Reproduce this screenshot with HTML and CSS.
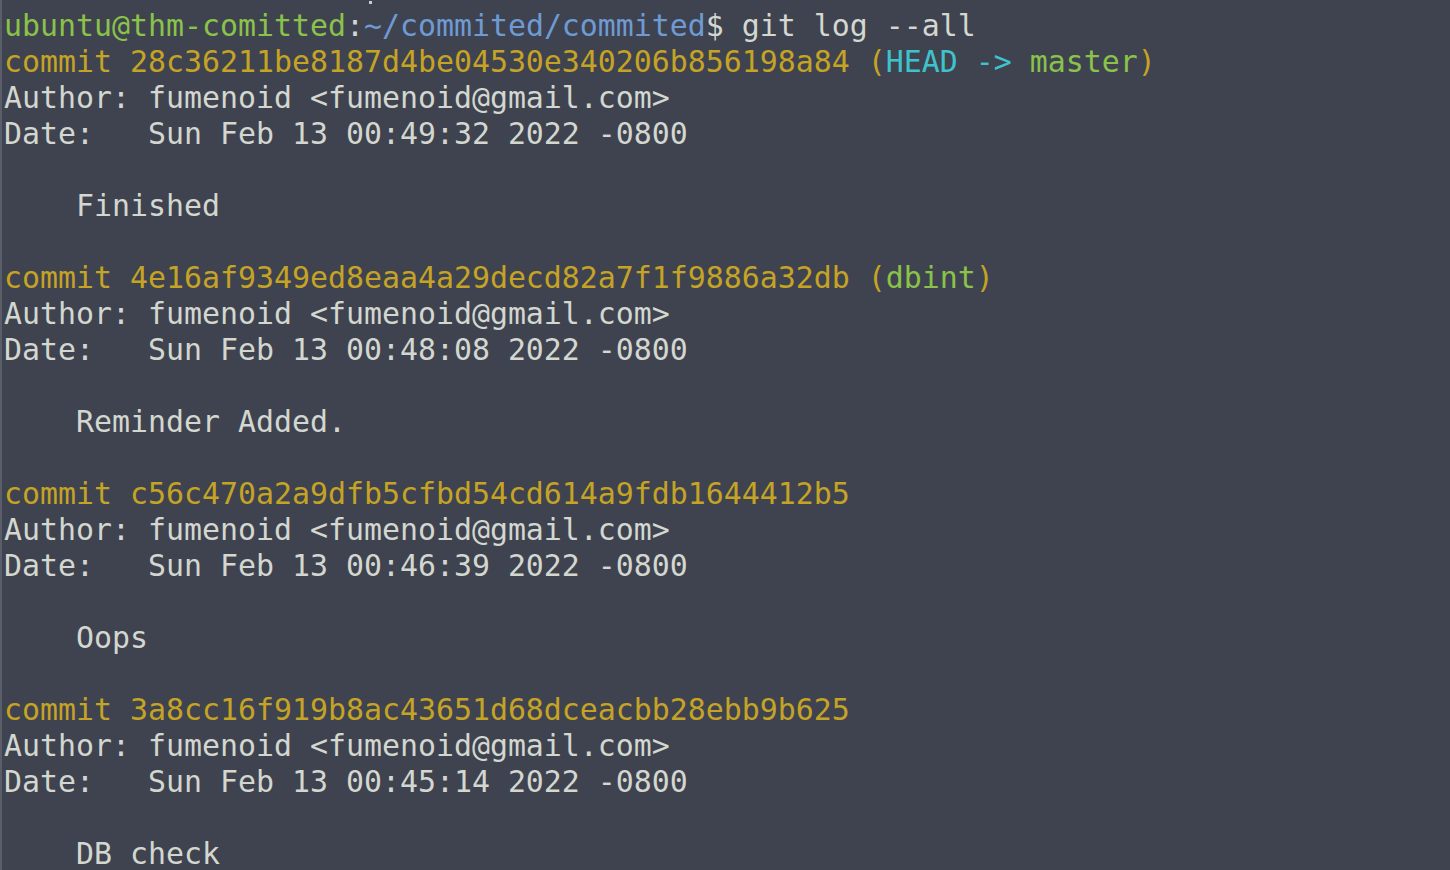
FILE: index.html
```html
<!DOCTYPE html>
<html>
<head>
<meta charset="utf-8">
<link rel="stylesheet" href="styles.css">
</head>
<body>
<div class="term">
<pre class="out"><span class="user">ubuntu@thm-comitted</span>:<span class="path">~/commited/commited</span>$ git log --all
<span class="y">commit 28c36211be8187d4be04530e340206b856198a84 (<span class="c">HEAD -&gt; </span><span class="g">master</span>)</span>
Author: fumenoid &lt;fumenoid@gmail.com&gt;
Date:   Sun Feb 13 00:49:32 2022 -0800

    Finished

<span class="y">commit 4e16af9349ed8eaa4a29decd82a7f1f9886a32db (<span class="g">dbint</span>)</span>
Author: fumenoid &lt;fumenoid@gmail.com&gt;
Date:   Sun Feb 13 00:48:08 2022 -0800

    Reminder Added.

<span class="y">commit c56c470a2a9dfb5cfbd54cd614a9fdb1644412b5</span>
Author: fumenoid &lt;fumenoid@gmail.com&gt;
Date:   Sun Feb 13 00:46:39 2022 -0800

    Oops

<span class="y">commit 3a8cc16f919b8ac43651d68dceacbb28ebb9b625</span>
Author: fumenoid &lt;fumenoid@gmail.com&gt;
Date:   Sun Feb 13 00:45:14 2022 -0800

    DB check</pre>
<span class="dot"></span>
</div>
</body>
</html>
```
FILE: styles.css
```css
html, body {
  margin: 0;
  padding: 0;
  width: 1450px;
  height: 870px;
  overflow: hidden;
  background: #3f4350;
}
.term {
  position: relative;
  height: 870px;
  border-left: 2px solid #5a5e69;
  background: #3f4350;
  padding: 8px 0 0 2px;
  box-sizing: border-box;
}
.out {
  margin: 0;
  font-family: "DejaVu Sans Mono", "Liberation Mono", monospace;
  font-size: 29.9px;
  line-height: 36px;
  color: #d3d7cf;
  white-space: pre;
}
.user { color: #8ac24a; }
.path { color: #6f9bd4; }
.y { color: #c5a324; }
.c { color: #3ec3cc; }
.g { color: #8ac24a; }
.dot {
  position: absolute;
  left: 367px;
  top: 1px;
  width: 3px;
  height: 3px;
  background: #c8ccd0;
}
```
